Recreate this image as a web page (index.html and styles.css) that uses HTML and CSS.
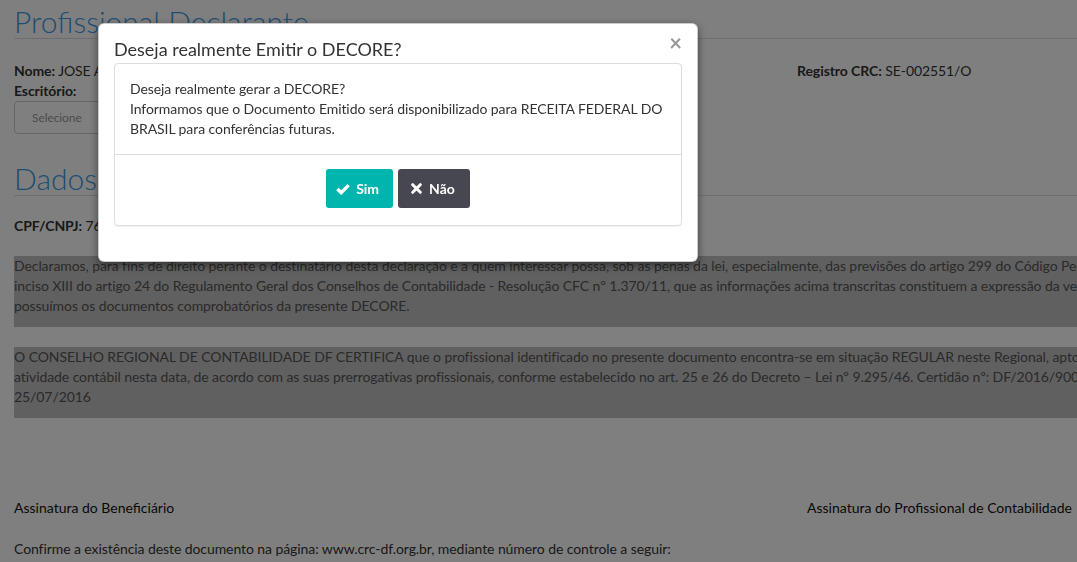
FILE: index.html
```html
<!DOCTYPE html>
<html lang="pt-BR">
<head>
<meta charset="utf-8">
<title>DECORE</title>
<link rel="stylesheet" href="styles.css">
</head>
<body class="modal-open">
<div class="page">
  <h2 class="section-title">Profissional Declarante</h2>
  <div class="info-row">
    <div class="info-left">
      <div class="line"><b>Nome:</b> JOSE ANTONIO DOS SANTOS</div>
      <div class="line"><b>Escritório:</b></div>
      <div class="select">Selecione</div>
    </div>
    <div class="info-right">
      <div class="line"><b>Registro CRC:</b> SE-002551/O</div>
    </div>
  </div>

  <h2 class="section-title second">Dados do Beneficiário</h2>
  <div class="line cpf"><b>CPF/CNPJ:</b> 763.512.845-00</div>

  <div class="declaration">
    <p>Declaramos, para fins de direito perante o destinatário desta declaração e a quem interessar possa, sob as penas da lei, especialmente, das previsões do artigo 299 do Código Penal Brasileiro e no<br>inciso XIII do artigo 24 do Regulamento Geral dos Conselhos de Contabilidade - Resolução CFC nº 1.370/11, que as informações acima transcritas constituem a expressão da verdade e que<br>possuímos os documentos comprobatórios da presente DECORE.</p>
  </div>

  <div class="declaration">
    <p>O CONSELHO REGIONAL DE CONTABILIDADE DF CERTIFICA que o profissional identificado no presente documento encontra-se em situação REGULAR neste Regional, apto ao exercício da<br>atividade contábil nesta data, de acordo com as suas prerrogativas profissionais, conforme estabelecido no art. 25 e 26 do Decreto – Lei nº 9.295/46. Certidão nº: DF/2016/90000 válida até<br>25/07/2016</p>
  </div>

  <div class="signatures">
    <div class="sig">Assinatura do Beneficiário</div>
    <div class="sig">Assinatura do Profissional de Contabilidade</div>
  </div>

  <div class="line confirm">Confirme a existência deste documento na página: www.crc-df.org.br, mediante número de controle a seguir:</div>
</div>

<div class="backdrop"></div>

<div class="modal" role="dialog">
  <div class="modal-content">
    <button class="close" type="button" aria-label="Fechar">×</button>
    <h4 class="modal-title">Deseja realmente Emitir o DECORE?</h4>
    <div class="panel">
      <div class="panel-body">
        Deseja realmente gerar a DECORE?<br>
        Informamos que o Documento Emitido será disponibilizado para RECEITA FEDERAL DO BRASIL para conferências futuras.
      </div>
      <div class="panel-footer">
        <button class="btn btn-yes" type="button">
          <svg class="ico" width="14" height="12" viewBox="0 0 14 12"><path d="M1.4 6 L5.2 9.7 L12.6 2.1" fill="none" stroke="#fff" stroke-width="3.4"/></svg>
          Sim
        </button>
        <button class="btn btn-no" type="button">
          <svg class="ico" width="11" height="11" viewBox="0 0 11 11"><path d="M1.7 1.7 L9.3 9.3 M9.3 1.7 L1.7 9.3" fill="none" stroke="#fff" stroke-width="3" stroke-linecap="round"/></svg>
          Não
        </button>
      </div>
    </div>
  </div>
</div>
</body>
</html>
```

FILE: styles.css
```css
html, body {
  margin: 0;
  padding: 0;
}
body {
  font-family: Lato, "Open Sans", "Liberation Sans", sans-serif;
  font-size: 14px;
  line-height: 20px;
  letter-spacing: -0.08px;
  color: #333;
  background: #fff;
}
body.modal-open {
  overflow: hidden;
}
.page {
  width: 1160px;
  padding: 5px 0 0 14px;
}
.section-title {
  margin: 0;
  font-size: 30px;
  font-weight: 300;
  line-height: 33px;
  letter-spacing: 0;
  color: #3a9be6;
  border-bottom: 1px solid #ddd;
}
.section-title.second {
  margin-top: 28px;
}
.info-row {
  display: grid;
  grid-template-columns: 783px 1fr;
  margin-top: 22px;
}
.line b {
  font-weight: 700;
}
.select {
  width: 300px;
  height: 33px;
  box-sizing: border-box;
  border: 1px solid #ccc;
  border-radius: 4px;
  padding: 0 17px;
  font-size: 12px;
  line-height: 31px;
  color: #999;
}
.cpf {
  margin-top: 20px;
}
.declaration {
  margin-top: 20px;
  background: #c0c0c0;
  color: #555;
}
.declaration p {
  margin: 0;
  padding-bottom: 11px;
  white-space: nowrap;
}
.signatures {
  display: grid;
  grid-template-columns: 793px 1fr;
  margin-top: 80px;
  letter-spacing: 0;
}
.sig {
  color: #111;
}
.confirm {
  margin-top: 21px;
}

.backdrop {
  position: fixed;
  inset: 0;
  background: rgba(0, 0, 0, 0.5);
}

.modal {
  position: fixed;
  top: 23px;
  left: 98px;
  width: 600px;
}
.modal-content {
  position: relative;
  box-sizing: border-box;
  background: #fff;
  border: 1px solid rgba(0, 0, 0, 0.2);
  border-radius: 6px;
  box-shadow: 0 3px 9px rgba(0, 0, 0, 0.5);
  padding: 15px;
}
.close {
  position: absolute;
  top: 8px;
  right: 15px;
  padding: 0;
  border: 0;
  background: none;
  font-family: Lato, "Liberation Sans", sans-serif;
  font-size: 22px;
  font-weight: 700;
  line-height: 22px;
  color: #999;
  cursor: pointer;
}
.modal-title {
  margin: 0 0 4px;
  font-size: 18px;
  font-weight: 400;
  line-height: 20px;
  letter-spacing: 0;
  color: #333;
}
.panel {
  border: 1px solid #ddd;
  border-radius: 4px;
  margin-bottom: 20px;
  box-shadow: 0 1px 1px rgba(0, 0, 0, 0.05);
}
.panel-body {
  padding: 15px;
  color: #333;
}
.panel-footer {
  border-top: 1px solid #ddd;
  padding: 14px 15px 17px;
  display: flex;
  justify-content: center;
  gap: 5px;
}
.btn {
  display: inline-flex;
  align-items: center;
  gap: 6px;
  height: 39px;
  box-sizing: border-box;
  padding: 0 14px 0 10px;
  border: 0;
  border-radius: 3px;
  font-family: Lato, "Liberation Sans", sans-serif;
  font-size: 14px;
  font-weight: 700;
  letter-spacing: 0;
  color: #fff;
  cursor: pointer;
}
.btn-yes {
  background: #00b5ad;
}
.btn-no {
  background: #474751;
  padding-left: 13px;
  padding-right: 15px;
  gap: 7px;
}
.ico {
  display: block;
}
```
